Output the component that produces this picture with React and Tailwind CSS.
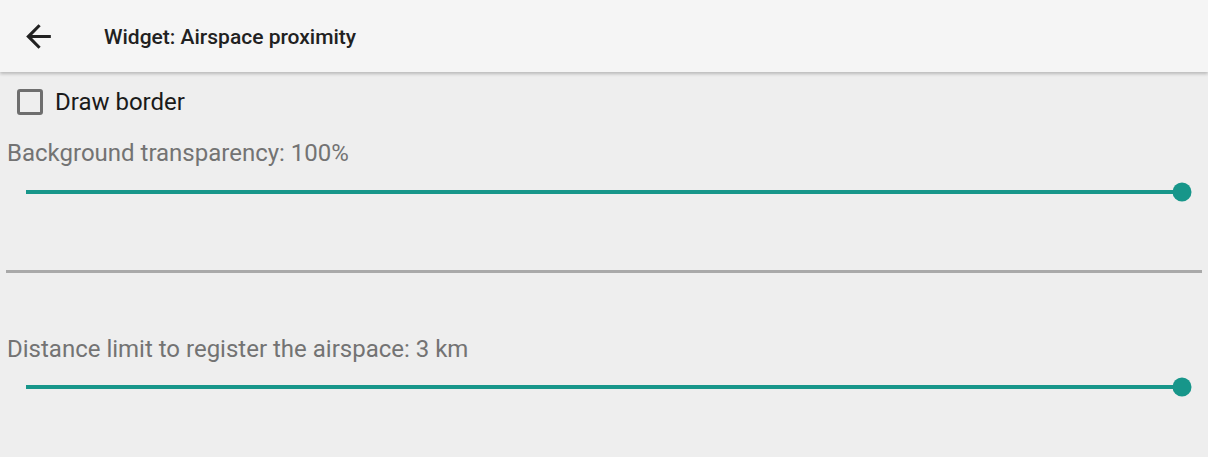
import React from "react";

const ArrowBack = () => (
  <svg width="37" height="37" viewBox="0 0 24 24" fill="#212121">
    <path d="M20 11H7.83l5.59-5.59L12 4l-8 8 8 8 1.41-1.41L7.83 13H20v-2z" />
  </svg>
);

const Slider = ({ value }) => (
  <div className="relative h-[20px] mx-[26px] flex items-center">
    <div className="h-[4px] w-full bg-[#c4e6e2]">
      <div className="h-full bg-[#17968a]" style={{ width: `${value}%` }} />
    </div>
    <div
      className="absolute top-1/2 w-[19px] h-[19px] -translate-x-1/2 -translate-y-1/2 rounded-full bg-[#17968a]"
      style={{ left: `${value}%` }}
    />
  </div>
);

export default function App() {
  return (
    <div className="w-[1208px] h-[457px] bg-[#eeeeee] overflow-hidden font-['Roboto',sans-serif]">
      <div className="relative h-[72px] bg-[#f5f5f5] flex items-center shadow-[0_2px_3px_rgba(0,0,0,0.22)]">
        <div className="w-[104px] pl-[20px] flex items-center">
          <ArrowBack />
        </div>
        <span className="pt-[3px] text-[21px] font-medium text-[#212121]">Widget: Airspace proximity</span>
      </div>

      <div className="flex items-center gap-[12px] pl-[17px] pt-[16px]">
        <div className="w-[26px] h-[26px] rounded-[3px] border-[3px] border-[#6e6e6e]" />
        <span className="text-[24px] leading-[28px] text-[#1a1a1a]">Draw border</span>
      </div>

      <div className="px-[7px] pt-[23px] text-[24px] leading-[28px] text-[#737373]">
        Background transparency: 100%
      </div>
      <div className="pt-[15px]">
        <Slider value={100} />
      </div>

      <div className="mt-[68px] mx-[6px] h-[3px] bg-[#a9a9a9]" />

      <div className="px-[7px] pt-[62px] text-[24px] leading-[28px] text-[#737373]">
        Distance limit to register the airspace: 3 km
      </div>
      <div className="pt-[14px]">
        <Slider value={100} />
      </div>
    </div>
  );
}
